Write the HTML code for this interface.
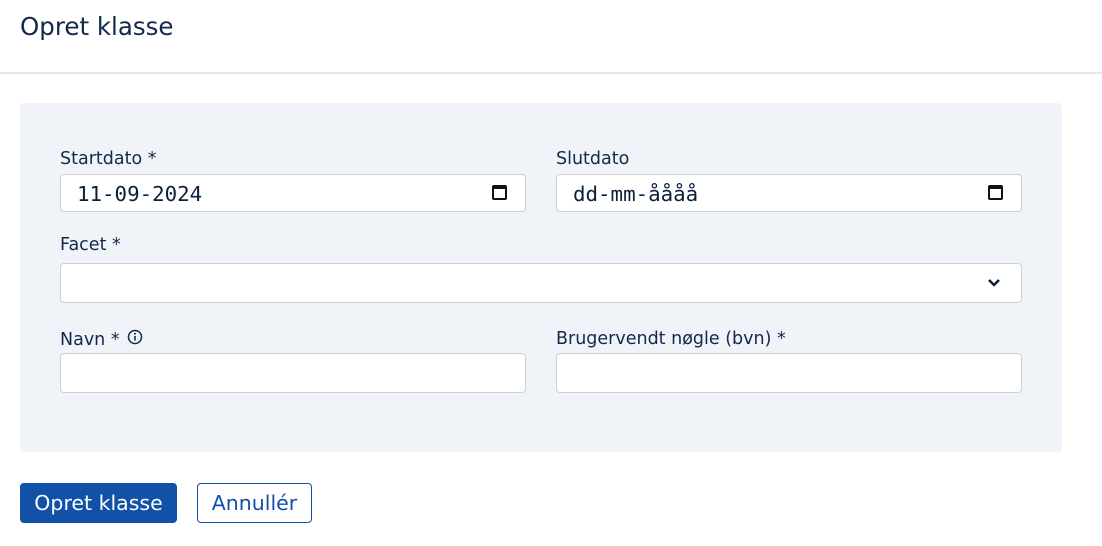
<!DOCTYPE html><html><head><style>
body{margin:0;background:#fff;font-family:"DejaVu Sans","Liberation Sans",sans-serif;color:#0b2a4a;width:1102px;height:546px;overflow:hidden;position:relative}
.a{position:absolute}
h1{position:absolute;left:20px;top:12px;margin:0;font-weight:normal;font-size:24.5px;color:#13294b}
.hr{left:0;top:72px;width:1102px;height:2px;background:#e3e6ea}
.panel{left:20px;top:103px;width:1042px;height:349px;background:#f0f3f8;border-radius:4px}
.lbl{font-size:17.5px;color:#13294b}
.inp{background:#fff;border:1px solid #cdd1d7;border-radius:4px;height:38px;box-sizing:border-box}
.mono{font-family:"DejaVu Sans Mono","Liberation Mono",monospace;font-size:20.8px;color:#0b1e3a;padding:7px 0 0 16px}
.cal{position:absolute;right:18px;top:10px;width:15px;height:15px;border:2px solid #111;border-top-width:4px;border-radius:2px;box-sizing:border-box}
.btn{border-radius:4px;font-size:20.5px;box-sizing:border-box;text-align:center;line-height:41px}
</style></head><body>
<h1>Opret klasse</h1>
<div class="a hr"></div>
<div class="a panel"></div>
<div class="a lbl" style="left:60px;top:149px">Startdato *</div>
<div class="a inp mono" style="left:60px;top:174px;width:466px">11-09-2024<div class="cal"></div></div>
<div class="a lbl" style="left:556px;top:149px">Slutdato</div>
<div class="a inp mono" style="left:556px;top:174px;width:466px">dd-mm-åååå<div class="cal"></div></div>
<div class="a lbl" style="left:60px;top:235px">Facet *</div>
<div class="a inp" style="left:60px;top:263px;width:962px;height:40px"><svg class="a" style="right:20px;top:14px" width="14" height="10" viewBox="0 0 14 10"><path d="M2 2l5 5 5-5" stroke="#0b1e3a" stroke-width="2.5" fill="none"/></svg></div>
<div class="a lbl" style="left:60px;top:329px">Navn * <svg width="16" height="16" viewBox="0 0 16 16" style="vertical-align:0px;margin-left:2px"><circle cx="8" cy="8" r="6.5" stroke="#13294b" stroke-width="1.5" fill="none"/><path d="M8 7v4.5" stroke="#13294b" stroke-width="1.6"/><circle cx="8" cy="4.8" r="1" fill="#13294b"/></svg></div>
<div class="a inp" style="left:60px;top:353px;width:466px;height:40px"></div>
<div class="a lbl" style="left:556px;top:329px">Brugervendt nøgle (bvn) *</div>
<div class="a inp" style="left:556px;top:353px;width:466px;height:40px"></div>
<div class="a btn" style="left:20px;top:483px;width:157px;height:40px;background:#1251a8;color:#fff">Opret klasse</div>
<div class="a btn" style="left:197px;top:483px;width:115px;height:40px;border:1px solid #1251a8;color:#1251a8;line-height:39px">Annullér</div>
</body></html>
